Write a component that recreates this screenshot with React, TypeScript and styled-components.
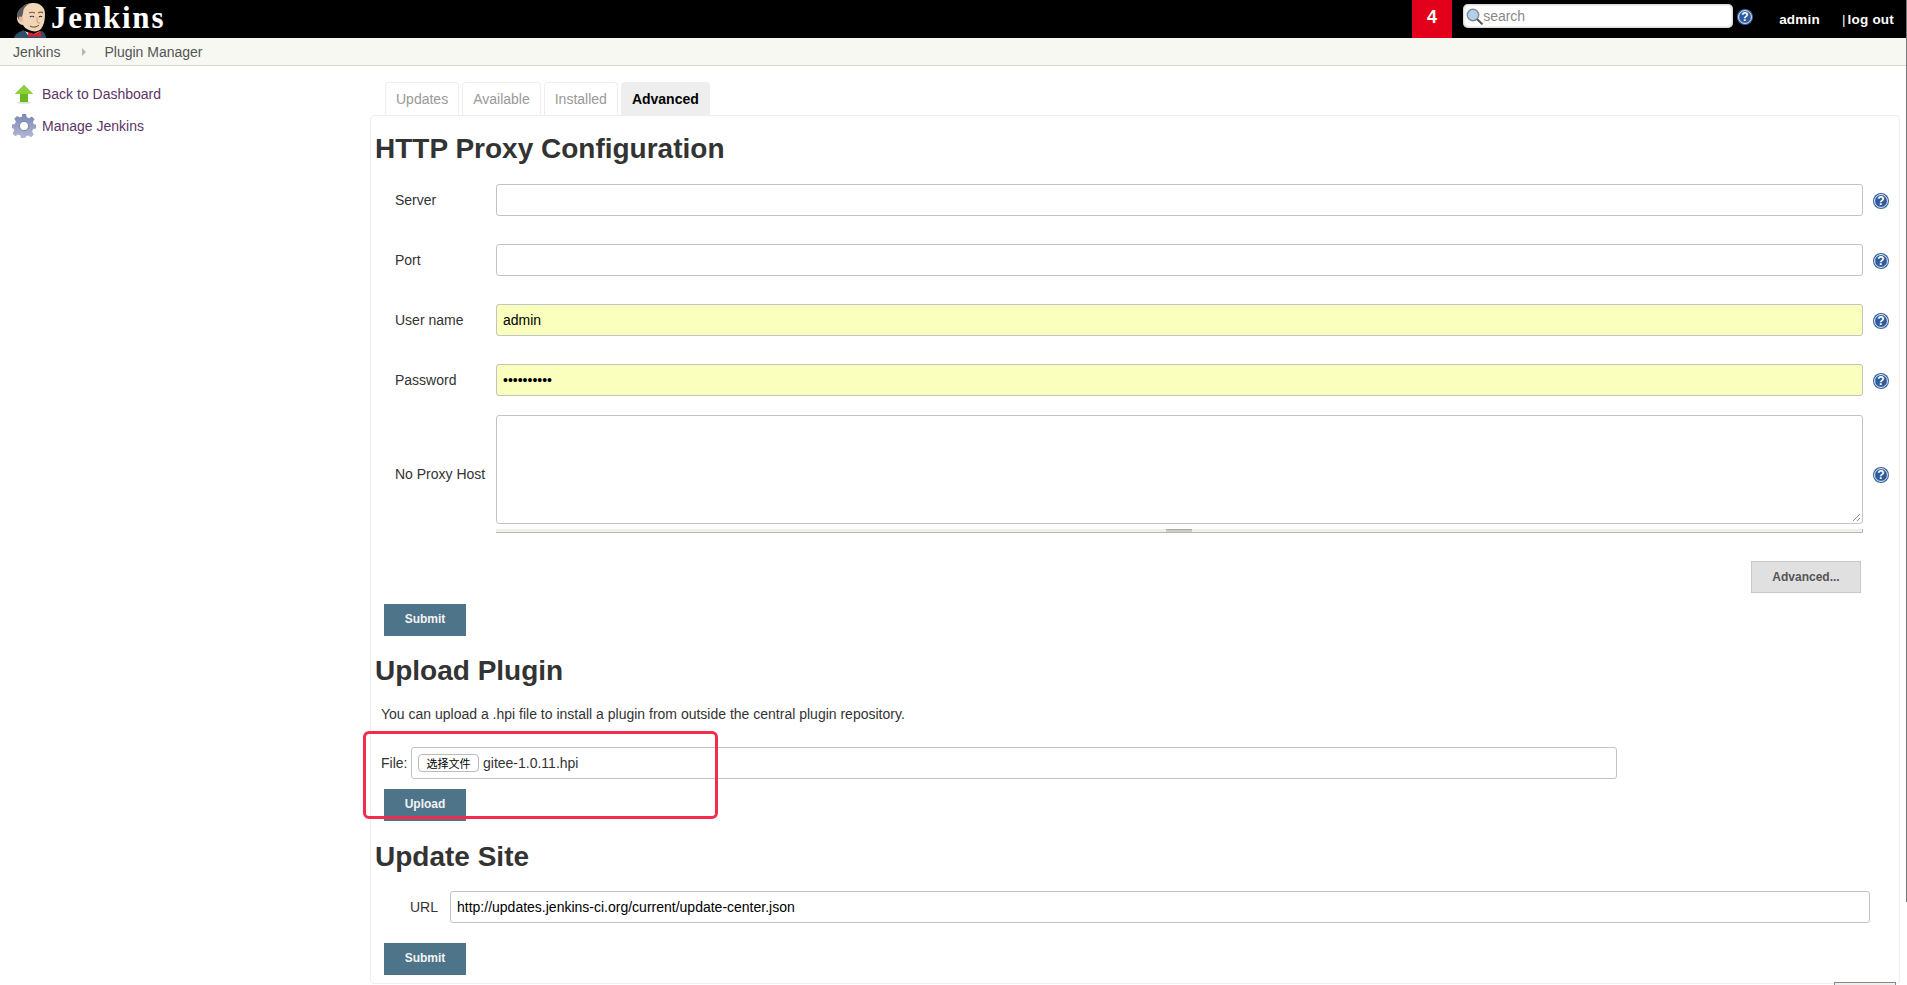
import React from 'react'
import styled, { createGlobalStyle } from 'styled-components'

const GlobalStyle = createGlobalStyle`
  html, body {
    margin: 0;
    height: 100%;
    overflow: hidden;
    background: #fff;
  }
  body {
    font-family: "Liberation Sans", Arial, sans-serif;
    font-size: 14px;
    color: #333;
  }
  * {
    box-sizing: border-box;
  }
`

const Page = styled.div`
  position: relative;
  width: 1907px;
  height: 985px;
  overflow: hidden;
`

const Header = styled.header`
  display: flex;
  align-items: flex-start;
  height: 38px;
  background: #000;
  color: #fff;
`

const Logo = styled.div`
  display: flex;
  align-items: flex-start;
  padding-left: 14px;
  flex: 1;
`

const LogoHead = styled.span`
  margin-top: 3px;
  line-height: 0;
`

const LogoText = styled.span`
  font-family: "Liberation Serif", serif;
  font-weight: 700;
  font-size: 31px;
  line-height: 35px;
  margin-left: 5px;
  letter-spacing: 1.8px;
`

const Badge = styled.div`
  width: 40px;
  height: 38px;
  margin-right: 11px;
  background: #e2001a;
  font-weight: 700;
  font-size: 18px;
  line-height: 34px;
  text-align: center;
`

const SearchBox = styled.div`
  display: flex;
  align-items: center;
  width: 270px;
  height: 24px;
  margin-top: 4px;
  padding-left: 3px;
  background: #fff;
  border-radius: 5px;
  box-shadow: inset 0 0 3px #999;
  color: #888;
  font-size: 14px;
`

const HeaderHelp = styled.div`
  margin: 9px 0 0 4px;
  line-height: 0;
`

const HeaderUser = styled.div`
  margin: 12px 0 0 26px;
  font-weight: 700;
  font-size: 13.5px;
  line-height: 15px;
  letter-spacing: 0.2px;
`

const HeaderLogout = styled(HeaderUser)`
  margin-left: 22px;
  margin-right: 13px;
`

const Pipe = styled.span`
  font-weight: 400;
  margin-right: 2px;
`

const Breadcrumbs = styled.nav`
  display: flex;
  align-items: center;
  height: 28px;
  padding-left: 13px;
  background: #f6f8f1;
  border-bottom: 1px solid #d3d7cf;
  color: #555;
  font-size: 14px;
`

const Crumb = styled.span``

const CrumbArrow = styled.span`
  width: 0;
  height: 0;
  margin: 0 18px 0 22px;
  border-left: 4px solid #b4b8ae;
  border-top: 4px solid transparent;
  border-bottom: 4px solid transparent;
`

const Body = styled.div`
  display: flex;
`

const Side = styled.aside`
  display: flex;
  flex-direction: column;
  gap: 8px;
  width: 370px;
  padding: 16px 0 0 12px;
`

const Task = styled.div`
  display: flex;
  align-items: center;
  height: 24px;
  color: #5c3566;
  font-size: 14px;
`

const TaskIcon = styled.span`
  display: flex;
  justify-content: center;
  width: 30px;
  padding-right: 6px;
`

const Main = styled.main`
  flex: 1;
  padding: 16px 7px 0 0;
`

const Tabs = styled.div`
  display: flex;
  gap: 3px;
  padding-left: 15px;
  height: 33px;
`

const Tab = styled.div<{ $active?: boolean }>`
  display: flex;
  align-items: center;
  padding: 0 10px;
  border: 1px solid #eee;
  border-bottom: 0;
  border-radius: 4px 4px 0 0;
  font-size: 14px;
  font-weight: ${p => (p.$active ? 700 : 400)};
  color: ${p => (p.$active ? '#000' : '#999')};
  background: ${p => (p.$active ? '#eee' : '#fff')};
`

const Panel = styled.section`
  height: 869px;
  padding: 0 0 0 4px;
  border: 1px solid #eee;
  border-radius: 4px;
`

const Heading = styled.h1<{ $top: number }>`
  margin: ${p => p.$top}px 0 0;
  font-size: 28px;
  line-height: 32px;
  font-weight: 700;
  color: #333;
`

const FieldRow = styled.div<{ $top: number }>`
  display: flex;
  align-items: center;
  margin-top: ${p => p.$top}px;
`

const FieldLabel = styled.label`
  width: 121px;
  padding-left: 20px;
  font-size: 14px;
  color: #333;
`

const TextField = styled.div<{ $filled?: boolean }>`
  width: 1367px;
  height: 32px;
  padding-left: 6px;
  border: 1px solid #c3c3c3;
  border-radius: 3px;
  background: ${p => (p.$filled ? '#faffbd' : '#fff')};
  font-size: 14px;
  line-height: 31px;
  color: #000;
`

const AreaColumn = styled.div`
  display: flex;
  flex-direction: column;
`

const AreaField = styled(TextField)`
  position: relative;
  height: 109px;
`

const Grip = styled.svg`
  position: absolute;
  right: 1px;
  bottom: 1px;
`

const HelpSlot = styled.div`
  margin: 1px 0 0 10px;
  line-height: 0;
`

const DragBar = styled.div`
  display: flex;
  justify-content: center;
  width: 1367px;
  height: 4px;
  margin-top: 5px;
  background: #eee;
  border-bottom: 1px solid #b8b8ae;
  border-right: 1px solid #b8b8ae;
`

const DragHandle = styled.div`
  width: 26px;
  height: 3px;
  background: #ccc;
  border-top: 1px solid #aaa;
`

const AdvancedRow = styled.div`
  display: flex;
  justify-content: flex-end;
  width: 1486px;
  margin-top: 28px;
`

const AdvancedButton = styled.div`
  width: 110px;
  height: 32px;
  background: #e0e0e0;
  border: 1px solid #c8c8c8;
  color: #555;
  font-weight: 700;
  font-size: 12px;
  line-height: 30px;
  text-align: center;
`

const BlueButton = styled.div<{ $top: number }>`
  width: 82px;
  height: 32px;
  margin: ${p => p.$top}px 0 0 9px;
  background: #4d7489;
  color: #f3f3f3;
  font-weight: 700;
  font-size: 12px;
  line-height: 31px;
  text-align: center;
`

const Intro = styled.p`
  margin: 18px 0 0 6px;
  font-size: 14px;
  line-height: 18px;
  color: #333;
`

const UploadRow = styled.div`
  display: flex;
  align-items: center;
  margin: 24px 0 0 6px;
`

const UploadLabel = styled.span`
  width: 30px;
  font-size: 14px;
`

const FileBox = styled.div`
  display: flex;
  align-items: center;
  width: 1206px;
  height: 32px;
  padding-left: 6px;
  border: 1px solid #c3c3c3;
  border-radius: 3px;
  font-size: 14px;
`

const ChooseButton = styled.span`
  width: 61px;
  height: 18px;
  margin-right: 4px;
  border: 1px solid #bbb;
  border-radius: 4px;
  color: #000;
  font-family: "Noto Sans CJK SC", sans-serif;
  font-size: 11px;
  line-height: 17px;
  text-align: center;
`

const UrlRow = styled.div`
  display: flex;
  align-items: center;
  margin-top: 18px;
`

const UrlLabel = styled.label`
  width: 75px;
  padding-right: 12px;
  text-align: right;
  font-size: 14px;
`

const UrlField = styled(TextField)`
  width: 1420px;
`

const CutOffButton = styled.div`
  position: absolute;
  right: 11px;
  bottom: 0;
  width: 62px;
  height: 3px;
  background: #f0eeec;
  border: 1px solid #888;
  border-bottom: 0;
`

const Scrollbar = styled.div`
  position: absolute;
  right: 0;
  top: 0;
  width: 1px;
  height: 902px;
  background: #777;
`

const Annotation = styled.div`
  position: absolute;
  left: 363px;
  top: 731px;
  width: 355px;
  height: 88px;
  border: 3px solid #f32b4d;
  border-radius: 6px;
`

const HelpIcon = () => (
  <svg width="16" height="16" viewBox="0 0 16 16">
    <circle cx="8" cy="8" r="8" fill="#3c67a6" />
    <circle cx="8" cy="8" r="6.4" fill="#2f5a9b" stroke="#e8eef7" strokeWidth="1" />
    <text x="8" y="12.3" textAnchor="middle" fontSize="12" fontWeight="700" fontFamily="Liberation Sans" fill="#fff">
      ?
    </text>
  </svg>
)

const JenkinsHead = () => (
  <svg width="32" height="35" viewBox="0 0 32 35">
    <path d="M0 35c1-4 5-6 10-8 2 3 6 4 11 4l7-3c3 2 4 5 4 7z" fill="#2d5068" />
    <path d="M11 28c3 2 6 3 9 3l6-3-3 4h-9z" fill="#fff" />
    <path d="M14 29l6 2 7-3v6l-6-1-1 2-1-2-5 1z" fill="#d6232b" />
    <path d="M8 5c2-4 8-5 12-5 6 0 11 4 11 11 0 6-1 11-4 15-3 3-8 3-12 1-3-1-5-3-6-5-3 0-6-3-6-7 0-5 2-8 5-10z" fill="#f0d6b7" />
    <path d="M8 4c2-2 5-3 7-3-4 2-6 5-6 9l-1 4-3 3c-1-2-2-3-2-5 0-3 2-6 5-8z" fill="#59585c" />
    <path d="M5 14c2-1 4 0 4 2s-1 3-2 3-3-3-2-5z" fill="#e3b598" />
    <path d="M15 10c2-1 4-1 6 0M24 10c2-1 4-1 5 0" fill="none" stroke="#7a5a44" strokeWidth="1.1" />
    <path d="M16 14c1-1 3-1 4 0M25 14c1-1 2-1 3 0" fill="none" stroke="#2a2a2a" strokeWidth="1.1" />
    <path d="M23 14c0 3 0 5 1 6l2 0" fill="none" stroke="#c99d7e" strokeWidth="1" />
    <path d="M16 23c3 2 7 1 9-1" fill="none" stroke="#5b3d2c" strokeWidth="1" />
  </svg>
)

const SearchIcon = () => (
  <svg width="17" height="17" viewBox="0 0 17 17">
    <circle cx="7" cy="7" r="5.7" fill="#b5d0e6" stroke="#7d8a94" strokeWidth="1.4" />
    <path d="M11.5 11.5l4.3 4.3" stroke="#555" strokeWidth="2" strokeLinecap="round" />
  </svg>
)

const ArrowUpIcon = () => (
  <svg width="20" height="20" viewBox="0 0 20 20">
    <ellipse cx="10" cy="18.6" rx="7" ry="1.2" fill="#ddd" />
    <path d="M10 1l9 9h-5v8H6v-8H1z" fill="#6ab71e" />
    <path d="M10 1l9 9H1z" fill="#8cd13a" />
  </svg>
)

const GearIcon = () => (
  <svg width="24" height="24" viewBox="0 0 24 24">
    <defs>
      <linearGradient id="gear" x1="0" y1="0" x2="0" y2="1">
        <stop offset="0" stopColor="#7b86b5" />
        <stop offset="1" stopColor="#b3b8d4" />
      </linearGradient>
    </defs>
    <path
      d="M10 0h4l.7 3.2 2.3 1 2.8-1.8 2.8 2.8L20.8 8l1 2.3L24 10.6v4l-2.9.7-1 2.3 1.7 2.8-2.8 2.8-2.8-1.7-2.3 1-.9 1.5h-4l-.6-2.5-2.3-1-2.8 1.7-2.8-2.8 1.7-2.8-1-2.3L0 14.6v-4l2.9-.7 1-2.3-1.7-2.8L5 2l2.8 1.6 2.3-1z"
      fill="url(#gear)"
    />
    <circle cx="12" cy="12" r="4.6" fill="#fff" stroke="#6b76a3" strokeWidth="0.8" />
  </svg>
)

const Field: React.FC<{ label: string; value?: string; top: number; filled?: boolean }> = ({
  label,
  value,
  top,
  filled,
}) => (
  <FieldRow $top={top}>
    <FieldLabel>{label}</FieldLabel>
    <TextField $filled={filled}>{value}</TextField>
    <HelpSlot>
      <HelpIcon />
    </HelpSlot>
  </FieldRow>
)

export default function App() {
  return (
    <Page>
      <GlobalStyle />
      <Header>
        <Logo>
          <LogoHead>
            <JenkinsHead />
          </LogoHead>
          <LogoText>Jenkins</LogoText>
        </Logo>
        <Badge>4</Badge>
        <SearchBox>
          <SearchIcon />
          search
        </SearchBox>
        <HeaderHelp>
          <HelpIcon />
        </HeaderHelp>
        <HeaderUser>admin</HeaderUser>
        <HeaderLogout>
          <Pipe>|</Pipe>log out
        </HeaderLogout>
      </Header>
      <Breadcrumbs>
        <Crumb>Jenkins</Crumb>
        <CrumbArrow />
        <Crumb>Plugin Manager</Crumb>
      </Breadcrumbs>
      <Body>
        <Side>
          <Task>
            <TaskIcon>
              <ArrowUpIcon />
            </TaskIcon>
            Back to Dashboard
          </Task>
          <Task>
            <TaskIcon>
              <GearIcon />
            </TaskIcon>
            Manage Jenkins
          </Task>
        </Side>
        <Main>
          <Tabs>
            <Tab>Updates</Tab>
            <Tab>Available</Tab>
            <Tab>Installed</Tab>
            <Tab $active>Advanced</Tab>
          </Tabs>
          <Panel>
            <Heading $top={17}>HTTP Proxy Configuration</Heading>
            <Field label="Server" top={19} />
            <Field label="Port" top={28} />
            <Field label="User name" value="admin" top={28} filled />
            <Field label="Password" value="••••••••••" top={28} filled />
            <FieldRow $top={19}>
              <FieldLabel>No Proxy Host</FieldLabel>
              <AreaColumn>
                <AreaField>
                  <Grip width="10" height="10" viewBox="0 0 10 10">
                    <path d="M2 9l7-7M6 9l3-3" stroke="#777" strokeWidth="0.8" />
                  </Grip>
                </AreaField>
                <DragBar>
                  <DragHandle />
                </DragBar>
              </AreaColumn>
              <HelpSlot>
                <HelpIcon />
              </HelpSlot>
            </FieldRow>
            <AdvancedRow>
              <AdvancedButton>Advanced...</AdvancedButton>
            </AdvancedRow>
            <BlueButton $top={11}>Submit</BlueButton>
            <Heading $top={19}>Upload Plugin</Heading>
            <Intro>You can upload a .hpi file to install a plugin from outside the central plugin repository.</Intro>
            <UploadRow>
              <UploadLabel>File:</UploadLabel>
              <FileBox>
                <ChooseButton>选择文件</ChooseButton>
                gitee-1.0.11.hpi
              </FileBox>
            </UploadRow>
            <BlueButton $top={10}>Upload</BlueButton>
            <Heading $top={20}>Update Site</Heading>
            <UrlRow>
              <UrlLabel>URL</UrlLabel>
              <UrlField>http://updates.jenkins-ci.org/current/update-center.json</UrlField>
            </UrlRow>
            <BlueButton $top={20}>Submit</BlueButton>
          </Panel>
        </Main>
      </Body>
      <Annotation />
      <CutOffButton />
      <Scrollbar />
    </Page>
  )
}
